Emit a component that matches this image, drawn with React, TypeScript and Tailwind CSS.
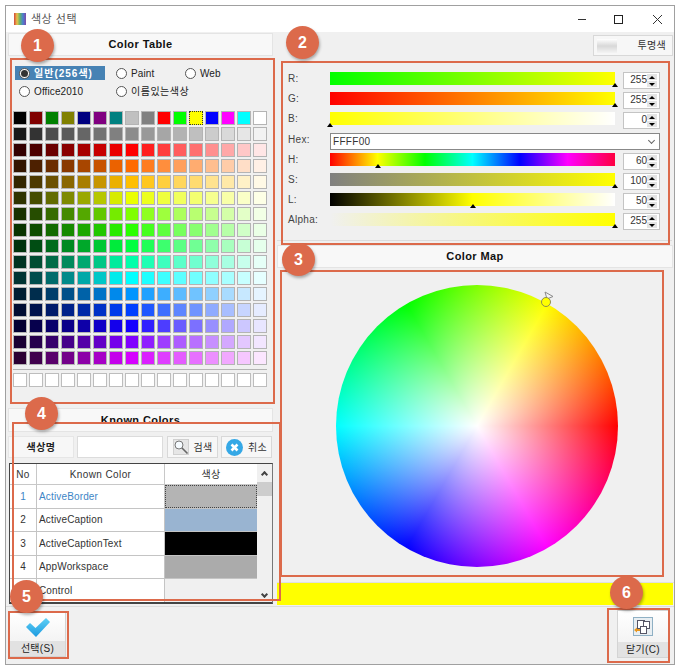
const latin = 'font-["Liberation_Sans","Noto_Sans_CJK_KR",sans-serif]'

const baseRow = [
  '#000000', '#800000', '#008000', '#808000', '#000080', '#800080', '#008080', '#c0c0c0',
  '#808080', '#ff0000', '#00ff00', '#ffff00', '#0000ff', '#ff00ff', '#00ffff', '#ffffff',
]
const grayRow = [
  '#1a1a1a', '#333333', '#4d4d4d', '#5a5a5a', '#666666', '#737373', '#808080', '#8c8c8c',
  '#999999', '#a6a6a6', '#b3b3b3', '#bfbfbf', '#cccccc', '#d9d9d9', '#e6e6e6', '#f2f2f2',
]
const hues = [0, 25, 45, 65, 90, 110, 135, 160, 180, 205, 225, 245, 270, 290]
const lights = [10, 15, 21, 27, 33, 39, 46, 50, 56, 62, 68, 72, 78, 83, 89, 95]

const sliders = [
  { label: 'R:', value: 255, pos: 1, bg: 'bg-[linear-gradient(to_right,#00ff00,#ffff00)]' },
  { label: 'G:', value: 255, pos: 1, bg: 'bg-[linear-gradient(to_right,#ff0000,#ffff00)]' },
  { label: 'B:', value: 0, pos: 0, bg: 'bg-[linear-gradient(to_right,#ffff00,#ffffff)]' },
  { label: 'H:', value: 60, pos: 60 / 360, bg: 'bg-[linear-gradient(to_right,#ff0000,#ffff00,#00ff00,#00ffff,#0000ff,#ff00ff,#ff0040)]' },
  { label: 'S:', value: 100, pos: 1, bg: 'bg-[linear-gradient(to_right,#808080,#ffff00)]' },
  { label: 'L:', value: 50, pos: 0.5, bg: 'bg-[linear-gradient(to_right,#000000,#ffff00,#ffffff)]' },
  { label: 'Alpha:', value: 255, pos: 1, bg: 'bg-[linear-gradient(to_right,#f0f0f0,#ffff00)]' },
]

const knownColors = [
  { no: '1', name: 'ActiveBorder', color: '#b4b4b4' },
  { no: '2', name: 'ActiveCaption', color: '#99b4d1' },
  { no: '3', name: 'ActiveCaptionText', color: '#000000' },
  { no: '4', name: 'AppWorkspace', color: '#ababab' },
  { no: '', name: 'Control', color: '#f0f0f0' }, // number sits under note 5 in the picture
]

function SectionHeader({ title, className }: { title: string; className: string }) {
  return (
    <div className={`flex items-center justify-center border border-[#e4e4e4] bg-[#f8f8f8] text-[11px] font-bold tracking-[0.4px] text-[#111] ${className}`}>
      {title}
    </div>
  )
}

function Radio({ label, checked, className }: { label: string; checked?: boolean; className: string }) {
  return (
    <div className={`flex h-[14px] items-center gap-[3px] text-[10px] ${checked ? 'bg-[#4682b4] font-bold tracking-[1px] text-white' : 'tracking-[0.1px] text-[#222]'} ${className}`}>
      <span className="ml-[4px] flex h-[11px] w-[11px] items-center justify-center rounded-full border border-[#555] bg-white">
        {checked && <span className="h-[7px] w-[7px] rounded-full bg-[#333]" />}
      </span>
      <span className="ml-[1px] whitespace-nowrap">{label}</span>
    </div>
  )
}

function Swatch({ color, selected }: { color: string; selected?: boolean }) {
  return (
    <div
      className={`h-[14px] w-[14px] border ${selected ? 'border-dotted border-[#333]' : 'border-[#b4b4b4]'}`}
      style={{ backgroundColor: color }}
    />
  )
}

function Spinner({ value }: { value: number }) {
  return (
    <div className="flex h-[17px] w-[37px] items-start justify-between border border-[#c4c4c4] bg-white pl-[2px] pr-[2px] pt-[1px]">
      <span className="w-[21px] text-right text-[10px] leading-[11px] text-[#333]">{value}</span>
      <div className="flex w-[10px] flex-col gap-px">
        <div className="flex h-[6px] items-center justify-center bg-[#e4e4e4]">
          <span className="border-x-[3px] border-b-[3px] border-x-transparent border-b-black" />
        </div>
        <div className="flex h-[6px] items-center justify-center bg-[#e4e4e4]">
          <span className="border-x-[3px] border-t-[3px] border-x-transparent border-t-black" />
        </div>
      </div>
    </div>
  )
}

function SliderRow({ label, value, pos, bg }: { label: string; value: number; pos: number; bg: string }) {
  return (
    <div className="flex h-[17px] items-start">
      <span className="w-[42px] text-[10px] leading-[14px] tracking-[0.3px] text-[#444]">{label}</span>
      <div className={`relative h-[13px] w-[285px] ${bg}`}>
        <span
          className="absolute top-[11px] -ml-[3px] border-x-[3px] border-b-[4px] border-x-transparent border-b-black"
          style={{ left: `${pos * 285}px` }}
        />
      </div>
      <div className="ml-[8px]">
        <Spinner value={value} />
      </div>
    </div>
  )
}

function CheckIcon() {
  return (
    <svg width="24" height="19" viewBox="0 0 24 19">
      <defs>
        <linearGradient id="chk" x1="0" y1="0" x2="0" y2="1">
          <stop offset="0" stopColor="#5fd0f5" />
          <stop offset="1" stopColor="#1c9ae0" />
        </linearGradient>
      </defs>
      <path d="M0 9 L4 5 L9.5 10 L20 0 L24 4 L10 19 Z" fill="url(#chk)" />
    </svg>
  )
}

function CloseIcon() {
  return (
    <svg width="20" height="19" viewBox="0 0 20 19">
      <rect x="0.5" y="0.5" width="19" height="18" fill="#e8eef2" stroke="#8fb0c4" />
      <rect x="4.5" y="3.5" width="7" height="8" fill="#fff" stroke="#556" />
      <rect x="10.5" y="4.5" width="6" height="7" fill="#fff" stroke="#556" />
      <rect x="7.5" y="9.5" width="6" height="7" fill="#fff" stroke="#556" />
      <path d="M1 13 L4 10.5 V12 H7 V14 H4 V15.5 Z" fill="#e8961e" />
    </svg>
  )
}

function SearchIcon() {
  return (
    <svg width="16" height="16" viewBox="0 0 16 16">
      <rect x="0.5" y="0.5" width="15" height="15" fill="#e6e6e6" stroke="#d0d0d0" />
      <circle cx="6" cy="6" r="4" fill="#f6fbff" stroke="#777" />
      <path d="M9 9 L14.5 14.5" stroke="#666" strokeWidth="1.6" />
    </svg>
  )
}

function CancelIcon() {
  return (
    <svg width="17" height="17" viewBox="0 0 17 17">
      <circle cx="8.5" cy="8.5" r="8.5" fill="#35a8e6" />
      <path d="M5.5 5.5 L11.5 11.5 M11.5 5.5 L5.5 11.5" stroke="#fff" strokeWidth="2.6" />
    </svg>
  )
}

function TitleIcon() {
  return <div className="h-[12px] w-[12px] bg-[linear-gradient(to_right,#d2453c,#e8c24a,#62b36a,#4a7fd0,#7d4aa8)]" />
}

function ToolButton({ icon, label }: { icon: React.ReactNode; label: string }) {
  return (
    <button className="flex h-[22px] w-[51px] items-center justify-center gap-[5px] border border-[#d8d8d8] bg-[#f7f7f7] text-[10px] tracking-[0.3px] text-[#333]">
      {icon}
      <span>{label}</span>
    </button>
  )
}

function FooterButton({ icon, label, className }: { icon: React.ReactNode; label: string; className: string }) {
  return (
    <button className={`flex flex-col border border-[#d4d4d4] bg-[linear-gradient(to_bottom,#ffffff,#eeeeee)] ${className}`}>
      <div className="flex flex-1 items-center justify-center">{icon}</div>
      <div className="flex h-[15px] items-center justify-center bg-[#e2e2e2] text-[10px] tracking-[0.3px] text-[#222]">{label}</div>
    </button>
  )
}

function KnownColorsTable() {
  return (
    <div className="ml-px mt-[5px] flex h-[141px] w-[264px] overflow-hidden border border-b-2 border-[#444] border-r-[#777] bg-white">
      <div className="min-w-0 flex-1">
        <div className="flex h-[21px] items-center border-b border-[#c8c8c8] text-[10px] tracking-[0.4px] text-[#333]">
          <div className="w-[27px] border-r border-[#c8c8c8] text-center leading-[21px]">No</div>
          <div className="w-[128px] border-r border-[#c8c8c8] text-center leading-[21px]">Known Color</div>
          <div className="flex-1 text-center leading-[21px]">색상</div>
        </div>
        {knownColors.map((row, i) => (
          <div key={row.name} className="flex h-[23.5px] border-b border-[#c4c4c4] text-[10px] tracking-[0.15px] text-[#333]">
            <div className={`flex w-[27px] items-center justify-center border-r border-[#c4c4c4] ${i === 0 ? 'text-[#3d85c6]' : ''}`}>
              {row.no}
            </div>
            <div className={`flex w-[128px] items-center border-r border-[#c4c4c4] pl-[2px] ${i === 0 ? 'text-[#3d85c6]' : ''}`}>
              {row.name}
            </div>
            <div
              className={`flex-1 ${i === 0 ? 'border border-dotted border-[#444]' : ''}`}
              style={{ backgroundColor: row.color }}
            />
          </div>
        ))}
      </div>
      <div className="flex w-[15px] flex-col items-center bg-[#f0f0f0]">
        <div className="flex h-[18px] items-center">
          <span className="h-[5px] w-[5px] translate-y-[1px] rotate-45 border-l-2 border-t-2 border-[#444]" />
        </div>
        <div className="h-[14px] w-full bg-[#cdcdcd]" />
        <div className="mt-auto flex h-[14px] items-center">
          <span className="h-[5px] w-[5px] -translate-y-[1px] rotate-45 border-b-2 border-r-2 border-[#444]" />
        </div>
      </div>
    </div>
  )
}

function ColorWheel() {
  return (
    <div className="relative h-[282px] w-[282px] rounded-full bg-[radial-gradient(circle_closest-side,#ffffff_0%,rgba(255,255,255,0)_100%),conic-gradient(from_90deg,#ff0000,#ff00ff,#0000ff,#00ffff,#00ff00,#ffff00,#ff0000)]">
      <svg className="absolute left-[204px] top-[6px]" width="16" height="16" viewBox="0 0 16 16">
        <path d="M5 1 L13 5.5 L7 8 Z" fill="#f4f4f4" stroke="#8a8a8a" />
        <circle cx="6" cy="11" r="4.5" fill="#ffff00" stroke="#8d8d50" />
      </svg>
    </div>
  )
}

function Note({ n, className }: { n: number; className: string }) {
  return (
    <div className={`absolute flex h-[33px] w-[33px] items-center justify-center rounded-full bg-[#dc6a4b] text-[16px] font-bold text-white shadow-[1px_2px_3px_rgba(0,0,0,0.3)] ${className}`}>
      {n}
    </div>
  )
}

export default function App() {
  return (
    <div className={`relative h-[672px] w-[682px] overflow-hidden bg-white pl-[5px] pt-[5px] ${latin}`}>
      <div className="h-[660px] w-[670px] border border-[#a0a0a0] bg-[#f0f0f0]">
        {/* TITLE BAR */}
        <div className="flex h-[26px] items-center bg-white pl-[8px]">
          <TitleIcon />
          <span className="ml-[5px] text-[11px] tracking-[0.5px] text-[#555]">색상 선택</span>
          <div className="ml-auto flex items-center">
            <svg width="86" height="12" viewBox="0 0 86 12" className="mr-[11px]">
              <path d="M1 6.5 H9" stroke="#333" fill="none" />
              <rect x="37.5" y="2.5" width="8" height="8" stroke="#222" fill="none" />
              <path d="M76 2 L85 11 M85 2 L76 11" stroke="#333" fill="none" />
            </svg>
          </div>
        </div>

        <div className="flex h-[574px]">
          {/* LEFT COLUMN */}
          <div className="w-[270px] pl-[2px]">
            <SectionHeader title="Color Table" className="mt-px h-[23px] w-[265px]" />
            <div className="mt-[10px] flex pl-[7px]">
              <Radio label="일반(256색)" checked className="w-[90px]" />
              <Radio label="Paint" className="ml-[7px] w-[69px]" />
              <Radio label="Web" className="w-[60px]" />
            </div>
            <div className="mt-[4px] flex pl-[7px]">
              <Radio label="Office2010" className="w-[97px]" />
              <Radio label="이름있는색상" className="w-[120px] tracking-[0.5px]" />
            </div>
            <div className="ml-[5px] mt-[13px] grid w-fit grid-cols-[repeat(16,14px)] gap-[2px]">
              {baseRow.map((c, i) => (
                <Swatch key={i} color={c} selected={i === 11} />
              ))}
              {grayRow.map((c, i) => (
                <Swatch key={i} color={c} />
              ))}
              {hues.flatMap((h) =>
                lights.map((l) => <Swatch key={`${h}-${l}`} color={`hsl(${h} 100% ${l}%)`} />),
              )}
            </div>
            <div className="ml-[5px] mt-[4px] h-px w-[254px] bg-[#b4b4b4]" />
            <div className="ml-[5px] mt-[3px] grid w-fit grid-cols-[repeat(16,14px)] gap-[2px]">
              {Array.from({ length: 16 }, (_, i) => (
                <div key={i} className="h-[14px] w-[14px] border border-[#bdbdbd] bg-white" />
              ))}
            </div>
            <SectionHeader title="Known Colors" className="mt-[21px] h-[24px] w-[265px]" />
            <div className="mt-[4px] flex h-[22px]">
              <div className="flex w-[66px] items-center justify-center border border-[#e6e6e6] bg-[#f7f7f7] text-[10px] font-bold tracking-[0.4px] text-[#222]">
                색상명
              </div>
              <div className="ml-[3px] w-[86px] border border-[#dcdcdc] bg-white" />
              <div className="ml-[4px]">
                <ToolButton icon={<SearchIcon />} label="검색" />
              </div>
              <div className="ml-[3px]">
                <ToolButton icon={<CancelIcon />} label="취소" />
              </div>
            </div>
            <KnownColorsTable />
          </div>

          {/* RIGHT COLUMN */}
          <div className="w-[398px]">
            <div className="mt-[3px] flex justify-end pr-px">
              <button className="flex h-[21px] w-[80px] items-center justify-between border border-[#d8d8d8] bg-[#f7f7f7] pl-[3px] pr-[6px] text-[10px] tracking-[0.3px] text-[#333]">
                <span className="h-[14px] w-[20px] bg-[linear-gradient(to_bottom,#ffffff,#d8d8d8,#f4f4f4)]" />
                <span>투명색</span>
              </button>
            </div>
            <div className="ml-px mr-[2px] flex flex-col gap-[3px] border-b border-[#dcdcdc] pb-[10px] pl-[11px] pt-[16px]">
              {sliders.slice(0, 3).map((s) => (
                <SliderRow key={s.label} {...s} />
              ))}
              <div className="mt-px flex h-[17px] items-start">
                <span className="w-[42px] text-[10px] leading-[14px] tracking-[0.3px] text-[#444]">Hex:</span>
                <div className="flex h-[17px] w-[330px] items-center justify-between border border-[#888] bg-white pl-[2px] pr-[5px] text-[10px] tracking-[0.3px] text-[#333]">
                  <span>FFFF00</span>
                  <span className="h-[5px] w-[5px] -translate-y-[1px] rotate-45 border-b border-r border-[#666]" />
                </div>
              </div>
              {sliders.slice(3).map((s) => (
                <SliderRow key={s.label} {...s} />
              ))}
            </div>
            <SectionHeader title="Color Map" className="ml-px mt-[4px] h-[23px] w-[396px]" />
            <div className="ml-px flex h-[315px] items-center border-b border-[#e0e0e0] pl-[59px] pt-[2px]">
              <ColorWheel />
            </div>
            <div className="ml-px h-[22px] w-[396px] bg-[#ffff00]" />
          </div>
        </div>

        {/* FOOTER */}
        <div className="flex h-[57px] items-start justify-between border-t border-[#dcdcdc] pl-[3px] pr-[5px]">
          <FooterButton icon={<CheckIcon />} label="선택(S)" className="mt-[5px] h-[45px] w-[57px]" />
          <FooterButton icon={<CloseIcon />} label="닫기(C)" className="mt-[3px] h-[48px] w-[52px]" />
        </div>
      </div>

      {/* ANNOTATIONS */}
      <div className="absolute left-[10px] top-[58px] h-[346px] w-[265px] border-2 border-[#dc6a4b]" />
      <div className="absolute left-[281px] top-[61px] h-[184px] w-[389px] border-2 border-[#dc6a4b]" />
      <div className="absolute left-[280px] top-[270px] h-[307px] w-[384px] border-2 border-[#dc6a4b]" />
      <div className="absolute left-[12px] top-[422px] h-[179px] w-[269px] border-2 border-[#dc6a4b]" />
      <div className="absolute left-[8px] top-[611px] h-[48px] w-[61px] border-2 border-[#dc6a4b]" />
      <div className="absolute left-[607px] top-[608px] h-[55px] w-[63px] border-2 border-[#dc6a4b]" />
      <Note n={1} className="left-[21px] top-[29px]" />
      <Note n={2} className="left-[286px] top-[26px]" />
      <Note n={3} className="left-[282px] top-[243px]" />
      <Note n={4} className="left-[25px] top-[397px]" />
      <Note n={5} className="left-[10px] top-[580px]" />
      <Note n={6} className="left-[610px] top-[576px]" />
    </div>
  )
}
